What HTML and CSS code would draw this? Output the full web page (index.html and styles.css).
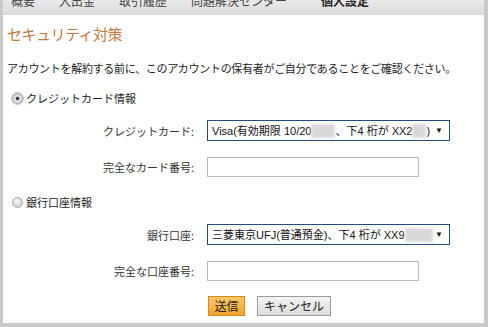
FILE: index.html
```html
<!DOCTYPE html>
<html lang="ja">
<head>
    <meta charset="utf-8" />
    <title>セキュリティ対策</title>
    <link rel="stylesheet" href="styles.css">
</head>
<body>
    <div class="frame">
        <nav class="tabs">
            <span>概要</span>
            <span>入出金</span>
            <span>取引履歴</span>
            <span>問題解決センター</span>
            <span class="current">個人設定</span>
        </nav>
        <div class="panel">
            <h1>セキュリティ対策</h1>
            <p class="intro">アカウントを解約する前に、このアカウントの保有者がご自分であることをご確認ください。</p>

            <div class="choice"><span class="radio checked"></span>クレジットカード情報</div>
            <div class="row">
                <label>クレジットカード:</label>
                <div class="select">Visa(有効期限 10/20<span class="blur w1"></span>、下4 桁が XX2<span class="blur w2"></span>)<span class="arrow">▼</span></div>
            </div>
            <div class="row">
                <label>完全なカード番号:</label>
                <div class="field"></div>
            </div>

            <div class="choice second"><span class="radio"></span>銀行口座情報</div>
            <div class="row">
                <label>銀行口座:</label>
                <div class="select">三菱東京UFJ(普通預金)、下4 桁が XX9<span class="blur w3"></span><span class="arrow">▼</span></div>
            </div>
            <div class="row">
                <label>完全な口座番号:</label>
                <div class="field"></div>
            </div>

            <div class="buttons">
                <span class="btn send">送信</span>
                <span class="btn">キャンセル</span>
            </div>
        </div>
    </div>
</body>
</html>
```
FILE: styles.css
```css
body, div, h1, p, nav {
    margin: 0;
    padding: 0;
}

body {
    background: #c9c9c9;
    font: 11px/14px "Noto Sans CJK JP", "Liberation Sans", sans-serif;
    color: #222;
}

.frame {
    height: 323px;
    padding: 0 4px 0 3px;
    display: flex;
    flex-direction: column;
}

.tabs {
    height: 14px;
    background: linear-gradient(to bottom, #e9e9e9 0%, #dcdcdc 100%);
    border-bottom: 1px solid #d4dbe4;
    overflow: hidden;
    display: flex;
    gap: 24px;
    padding-left: 8px;
    font-size: 12px;
    line-height: 12px;
    color: #444;
}

    .tabs span {
        margin-top: -5px;
    }

    .tabs .current {
        margin-left: 10px;
        font-weight: bold;
        color: #222;
    }

.panel {
    flex: 1;
    background: #fff;
    padding: 9px 0 0 4px;
}

h1 {
    font-size: 15px;
    line-height: 20px;
    font-weight: normal;
    color: #c2793a;
    letter-spacing: -0.5px;
}

.intro {
    margin-top: 17px;
    letter-spacing: -0.3px;
}

.choice {
    margin-top: 16px;
    display: flex;
    align-items: center;
    gap: 3px;
    padding-left: 5px;
    height: 14px;
}

    .choice.second {
        margin-top: 18px;
    }

.radio {
    width: 11px;
    height: 11px;
    border-radius: 50%;
    background: radial-gradient(circle at 40% 35%, #fafafa 0%, #d2d2d2 70%, #b4b4b4 100%);
    border: 1px solid #a6a6a6;
    box-sizing: border-box;
}

    .radio.checked {
        box-shadow: 0 0 0 1px #b9cbe6;
        background: radial-gradient(circle, #444 0%, #444 28%, #e6e6e6 34%, #c8c8c8 100%);
    }

.row {
    display: flex;
    align-items: center;
    margin-top: 15px;
    height: 21px;
}

    .row + .row {
        margin-top: 15px;
    }

    .row label {
        width: 187px;
        text-align: right;
        color: #333;
    }

.select, .field {
    margin-left: 13px;
    height: 21px;
    box-sizing: border-box;
}

.select {
    width: 243px;
    border: 1px solid #1f4f82;
    display: flex;
    align-items: center;
    padding-left: 4px;
    font: 11px/14px "Liberation Sans", "Noto Sans CJK JP", sans-serif;
    color: #111;
    white-space: nowrap;
}

.arrow {
    margin-left: auto;
    margin-right: 6px;
    font-size: 8px;
}

.blur {
    display: inline-block;
    height: 14px;
    background: #d8d8da;
    filter: blur(1.5px);
}

    .blur.w1 { width: 24px; }
    .blur.w2 { width: 14px; }
    .blur.w3 { width: 28px; }

.field {
    width: 212px;
    height: 20px;
    border: 1px solid #b4bcc4;
}

.buttons {
    margin: 15px 0 0 201px;
    display: flex;
    gap: 12px;
}

.btn {
    height: 20px;
    box-sizing: border-box;
    padding: 0 6px;
    line-height: 18px;
    font-size: 12px;
    white-space: nowrap;
    border: 1px solid #9a9a9a;
    background: linear-gradient(to bottom, #f4f4f4 0%, #dcdcdc 100%);
}

    .btn.send {
        width: 37px;
        padding: 0;
        text-align: center;
        border-color: #d38a1a;
        background: linear-gradient(to bottom, #fbc76a 0%, #f4a22c 100%);
    }
```
